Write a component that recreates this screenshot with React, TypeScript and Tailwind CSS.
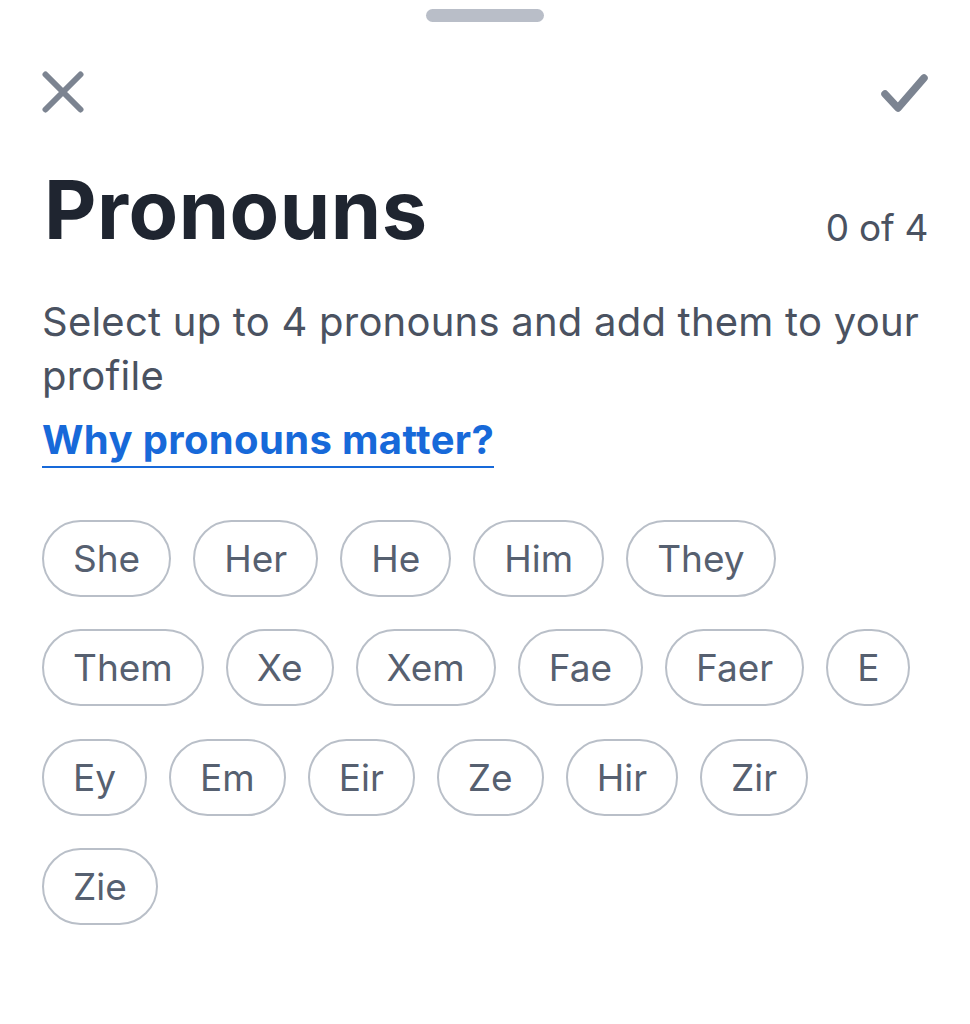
import React from "react";

const rows: string[][] = [
  ["She", "Her", "He", "Him", "They"],
  ["Them", "Xe", "Xem", "Fae", "Faer", "E"],
  ["Ey", "Em", "Eir", "Ze", "Hir", "Zir"],
  ["Zie"],
];

function Chip({ label }: { label: string }) {
  return (
    <button className="h-[77px] px-[29px] rounded-full border-2 border-[#b9bfc8] bg-white flex items-center text-[37px] leading-none text-[#566070]">
      {label}
    </button>
  );
}

export default function App() {
  return (
    <div className="w-[970px] h-[1024px] bg-white overflow-hidden font-['Inter',sans-serif]">
      <div className="flex justify-center pt-[9px]">
        <div className="w-[118px] h-[13px] rounded-full bg-[#b9bec8]" />
      </div>

      <div className="flex justify-between items-start pl-[42px] pr-[42px] mt-[49px]">
        <svg width="42" height="42" viewBox="0 0 42 42" fill="none">
          <path d="M3.5 3.5L38.5 38.5M38.5 3.5L3.5 38.5" stroke="#7c8491" strokeWidth="6" strokeLinecap="round" />
        </svg>
        <svg width="52" height="46" viewBox="0 0 52 46" fill="none" className="-mt-[3px]">
          <path d="M9 26L22 40L48 10" stroke="#7c8491" strokeWidth="7.5" strokeLinecap="round" strokeLinejoin="round" />
        </svg>
      </div>

      <div className="flex justify-between items-baseline px-[42px] mt-[56px]">
        <h1 className="text-[81px] leading-[81px] font-bold tracking-[0.5px] text-[#1f2530] ml-[2px]">Pronouns</h1>
        <span className="relative top-[2px] text-[37px] tracking-[-0.3px] text-[#4a5261]">0 of 4</span>
      </div>

      <p className="px-[42px] mt-[41px] text-[40px] leading-[54px] tracking-[0.23px] text-[#4a5261]">
        Select up to 4 pronouns and add them to your profile
      </p>

      <div className="px-[42px] mt-[13px]">
        <a className="inline-block text-[40px] leading-[48px] font-bold tracking-[0.35px] text-[#1769d9] border-b-2 border-[#1769d9] pb-[2px]">
          Why pronouns matter?
        </a>
      </div>

      <div className="px-[42px] mt-[52px] flex flex-col gap-[32.5px]">
        {rows.map((row, i) => (
          <div key={i} className="flex gap-[22px]">
            {row.map((p) => (
              <Chip key={p} label={p} />
            ))}
          </div>
        ))}
      </div>
    </div>
  );
}
